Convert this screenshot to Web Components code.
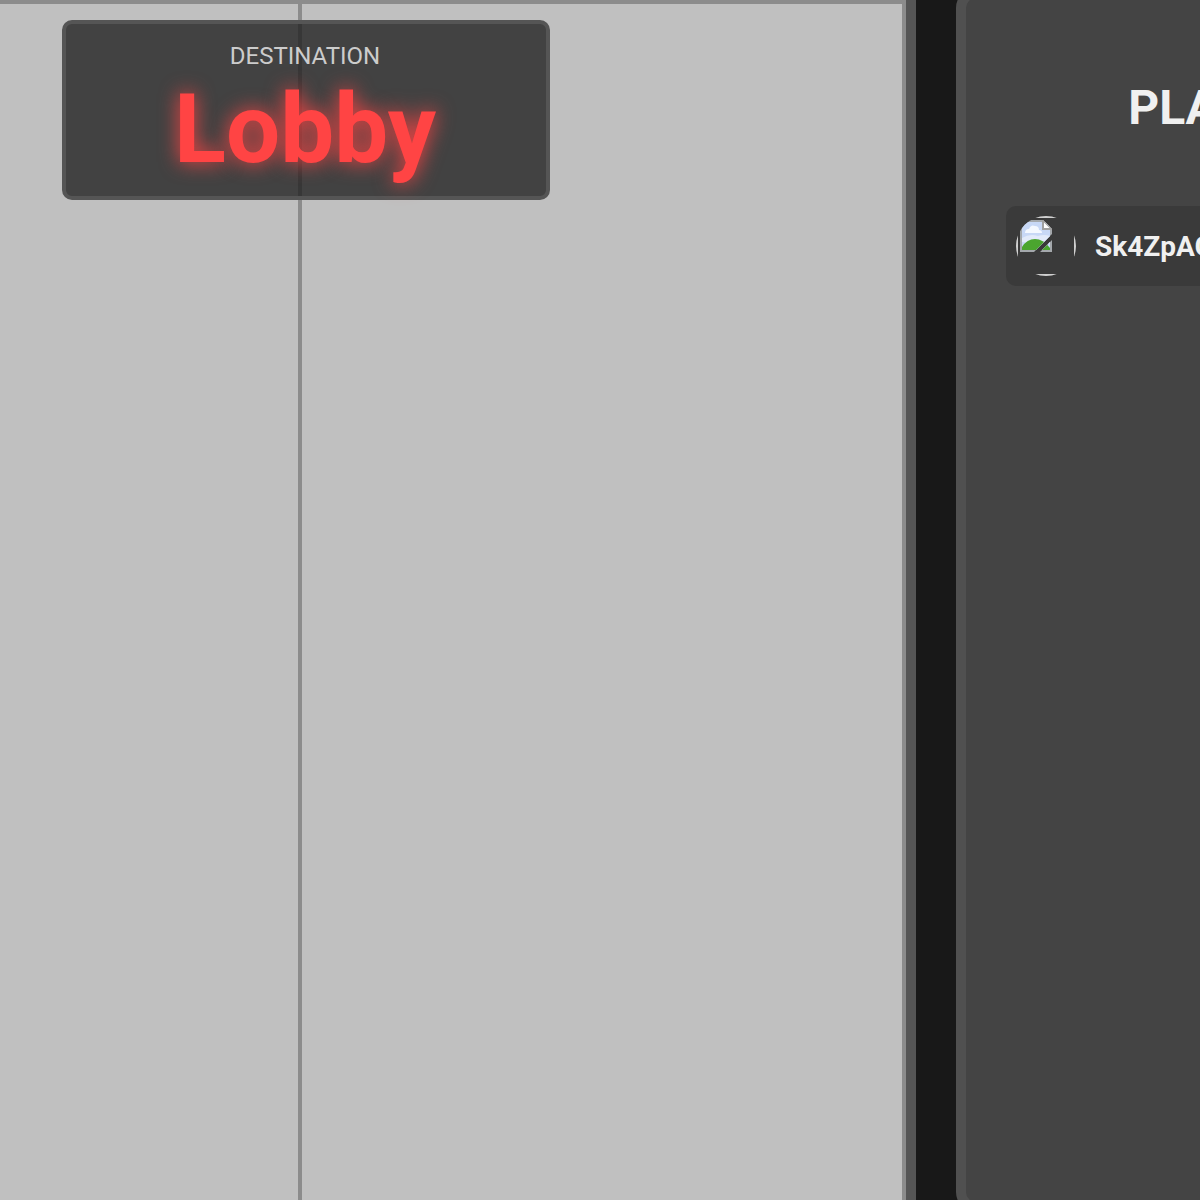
<!DOCTYPE html>
<html lang="en">
<head>
<meta charset="utf-8">
<title>Elevator</title>
<style>
  body {
    margin: 0;
    overflow: hidden;
    background: #181818;
    font-family: Roboto, sans-serif;
    color: #f0f0f0;
  }
</style>
</head>
<body>
<elevator-app>
  <elevator-car>
    <destination-display label="DESTINATION">Lobby</destination-display>
  </elevator-car>
  <player-panel heading="PLAYERS">
    <player-row>Sk4ZpAG</player-row>
  </player-panel>
</elevator-app>

<script>
"use strict";

customElements.define("elevator-app", class extends HTMLElement {
  constructor() {
    super();
    this.attachShadow({mode: 'open'}).innerHTML = `
      <style>
        :host {
          display: flex;
          gap: 40px;
          height: 100vh;
          overflow: hidden;
        }
      </style>
      <slot></slot>
    `;
  }
});

// Two sliding doors with the destination sign hung over them
customElements.define("elevator-car", class extends HTMLElement {
  constructor() {
    super();
    this.attachShadow({mode: 'open'}).innerHTML = `
      <style>
        :host {
          display: grid;
          grid-template-columns: 50fr 101fr;
          position: relative;
          box-sizing: border-box;
          flex: 0 0 calc(100% - 284px);
          border-right: 10px solid #555;
        }
        .door {
          background: #c0c0c0;
          border: 0 solid #8c8c8c;
          border-top-width: 4px;
        }
        .left {
          border-right-width: 2px;
        }
        .right {
          border-left-width: 2px;
          border-right-width: 4px;
        }
      </style>
      <div class="door left"></div>
      <div class="door right"></div>
      <slot></slot>
    `;
  }
});

customElements.define("destination-display", class extends HTMLElement {
  constructor() {
    super();
    this.attachShadow({mode: 'open'}).innerHTML = `
      <style>
        :host {
          display: block;
          position: absolute;
          top: 20px;
          left: 62px;
          width: 488px;
          box-sizing: border-box;
          padding: 16px 20px 10px 18px;
          border: 4px solid #555;
          border-radius: 10px;
          background: rgba(34, 34, 34, 0.8);
          text-align: center;
        }
        .label {
          font-size: 24px;
          line-height: 32px;
          color: #ccc;
        }
        .floor {
          font-size: 96px;
          line-height: 114px;
          font-weight: 700;
          color: #ff4444;
          text-shadow: 0 0 20px #ff4444;
        }
      </style>
      <div class="label"></div>
      <div class="floor"><slot></slot></div>
    `;
  }

  connectedCallback() {
    this.shadowRoot.querySelector(".label").textContent = this.getAttribute("label");
  }
});

customElements.define("player-panel", class extends HTMLElement {
  constructor() {
    super();
    this.attachShadow({mode: 'open'}).innerHTML = `
      <style>
        :host {
          display: block;
          box-sizing: border-box;
          flex: 0 0 548px;
          margin: -12px 0;
          padding: 82px 40px 40px;
          border: 10px solid #505050;
          border-radius: 20px;
          background: #444;
        }
        h2 {
          margin: 0 0 70px;
          font-size: 48px;
          line-height: 56px;
          font-weight: 700;
          text-align: center;
        }
      </style>
      <h2></h2>
      <slot></slot>
    `;
  }

  connectedCallback() {
    this.shadowRoot.querySelector("h2").textContent = this.getAttribute("heading");
  }
});

customElements.define("player-row", class extends HTMLElement {
  constructor() {
    super();
    this.attachShadow({mode: 'open'}).innerHTML = `
      <style>
        :host {
          display: flex;
          align-items: center;
          gap: 19px;
          padding: 10px;
          border-radius: 10px;
          background: #3a3a3a;
          font-size: 28px;
          line-height: 32px;
          font-weight: 700;
        }
        span {
          padding-top: 2px;
        }
      </style>
      <svg width="60" height="60" viewBox="0 0 60 60" aria-hidden="true">
        <clipPath id="round"><circle cx="30" cy="30" r="30"/></clipPath>
        <clipPath id="page"><path d="M4 4H27L36 13V18L18 36H4ZM36 24V36H24Z"/></clipPath>
        <g clip-path="url(#round)">
          <rect x="1" y="1" width="58" height="58" fill="none" stroke="#d0d0d0" stroke-width="2"/>
          <g clip-path="url(#page)">
            <rect x="4" y="4" width="32" height="32" fill="#a4a8ac"/>
            <rect x="6" y="6" width="28" height="28" fill="#c8d8f6"/>
            <path d="M6 26V22Q14 17 22 20Q28 18 34 20V28Z" fill="#e2eafa"/>
            <path d="M9 17q0-4 4-4q2-5 6-3q4 0 4 4q3 0 3 3H9Z" fill="#f4f8ff"/>
            <path d="M6 34V31Q11 23 19 23Q27 23 34 32V34Z" fill="#4ba52f"/>
            <path d="M27 4L36 13H27Z" fill="#fff" stroke="#a0a0a0" stroke-width="2"/>
          </g>
        </g>
      </svg>
      <span><slot></slot></span>
    `;
  }
});
</script>
</body>
</html>
